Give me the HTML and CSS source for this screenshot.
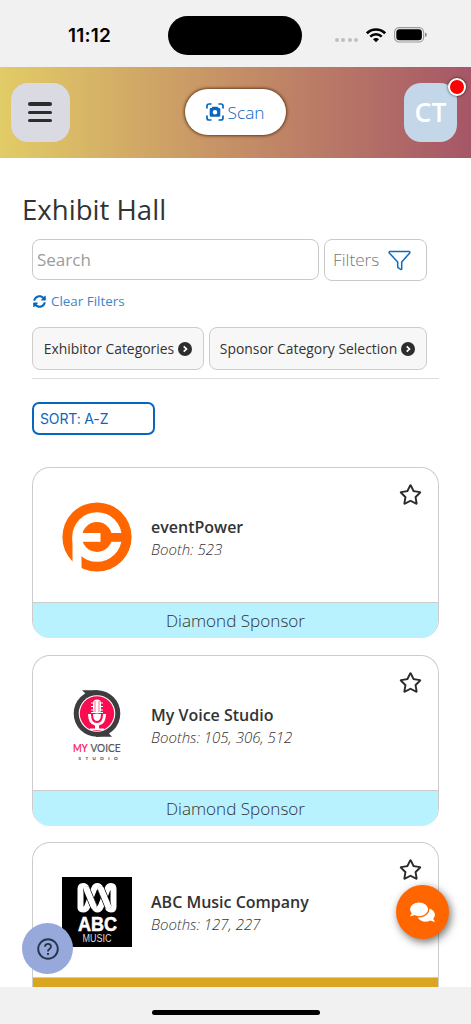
FILE: index.html
```html
<!DOCTYPE html>
<html lang="en">
<head>
<meta charset="utf-8">
<title>Exhibit Hall</title>
<link rel="stylesheet" href="styles.css">
</head>
<body>
<svg class="defs" width="0" height="0">
  <symbol id="star" viewBox="0 0 576 512"><path d="M528.1 171.5L382 150.2 316.7 17.8c-11.700-23.600-45.600-23.900-57.400 0L194 150.200 47.900 171.500c-26.200 3.800-36.700 36.100-17.700 54.600l105.700 103-25 145.500c-4.500 26.300 23.200 46 46.400 33.700L288 439.600l130.700 68.700c23.200 12.200 50.900-7.400 46.400-33.700l-25-145.500 105.700-103c19-18.500 8.500-50.800-17.700-54.600zM388.600 312.300l23.700 138.400L288 385.400l-124.300 65.300 23.700-138.400-100.600-98 139-20.200 62.200-126 62.200 126 139 20.200-100.600 98z"/></symbol>
  <symbol id="chevron" viewBox="0 0 14 14"><circle cx="7" cy="7" r="7" fill="#2d2d2d"/><path d="M5.700 4.300 8.500 7 5.700 9.700" fill="none" stroke="#fff" stroke-width="1.700"/></symbol>
</svg>
<div class="app">
  <div class="status">
    <span class="time">11:12</span>
    <span class="island"></span>
    <span class="signals">
      <span class="dots"><i></i><i></i><i></i><i></i></span>
      <svg class="wifi" width="20" height="15" viewBox="0 0 20 15" fill="none" stroke="#000" stroke-width="2.600"><path d="M.9 5.300C6 .2 14 .2 19.100 5.300"/><path d="M4.300 8.700c3.200-3.200 8.200-3.200 11.400 0"/><path d="M7 11.300c1.600-1.600 4.400-1.600 6 0L10 14.300z" fill="#000" stroke="none"/></svg>
      <svg width="33" height="16" viewBox="0 0 33 16"><rect x=".6" y=".6" width="29" height="14.400" rx="4.600" fill="none" stroke="#999" stroke-width="1.100"/><rect x="2.300" y="2.300" width="25.600" height="11" rx="3.200"/><path d="M31 5.500q1.800.6 1.800 2.300T31 10.100z" fill="#888"/></svg>
    </span>
  </div>
  <header class="topbar">
    <button class="menu"><i></i><i></i><i></i></button>
    <button class="scan">
      <svg width="18" height="18" viewBox="0 0 18 18"><path d="M1 5.500V3q0-2 2-2h2.500M12.500 1H15q2 0 2 2v2.500M17 12.500V15q0 2-2 2h-2.500M5.500 17H3q-2 0-2-2v-2.500" fill="none" stroke="#0a66bd" stroke-width="1.700"/><path fill="#0a66bd" fill-rule="evenodd" d="M5.500 5 6.500 3.700h5L12.500 5H13q1.300 0 1.300 1.300v6.200q0 1.300-1.300 1.300H5q-1.300 0-1.300-1.300V6.300Q3.700 5 5 5zM9 7a2.300 2.300 0 1 0 0 4.600A2.300 2.300 0 0 0 9 7z"/></svg>
      <span>Scan</span>
    </button>
    <div class="avatar">CT<span class="badge"></span></div>
  </header>
  <main class="content">
    <h1>Exhibit Hall</h1>
    <div class="body">
      <div class="search-row">
        <div class="search">Search</div>
        <div class="filters">Filters <svg width="23" height="21" viewBox="0 0 23 21"><path d="M1.600 1.500h19.800q.9.700.1 1.700L13.700 12v7.300l-1 .2-3-2.200V12L1.500 3.200q-.8-1 .1-1.700z" fill="none" stroke="#0a6bc4" stroke-width="1.500" stroke-linejoin="round"/></svg></div>
      </div>
      <div class="clear"><svg width="13" height="13" viewBox="0 0 512 512"><path fill="#0a66bd" d="M370.720 133.280C339.458 104.008 298.888 87.962 255.848 88c-77.458.068-144.328 53.178-162.791 126.850-1.344 5.363-6.122 9.150-11.651 9.150H24.103c-7.498 0-13.194-6.807-11.807-14.176C33.933 94.924 134.813 8 256 8c66.448 0 126.791 26.136 171.315 68.685L463.030 40.970C478.149 25.851 504 36.559 504 57.941V192c0 13.255-10.745 24-24 24H345.941c-21.382 0-32.090-25.851-16.971-40.971l41.750-41.749zM32 296h134.059c21.382 0 32.090 25.851 16.971 40.971l-41.750 41.750c31.262 29.273 71.835 45.319 114.876 45.280 77.418-.07 144.315-53.144 162.787-126.849 1.344-5.363 6.122-9.150 11.651-9.150h57.304c7.498 0 13.194 6.807 11.807 14.176C478.067 417.076 377.187 504 256 504c-66.448 0-126.791-26.136-171.315-68.685L48.970 471.030C33.851 486.149 8 475.441 8 454.059V320c0-13.255 10.745-24 24-24z"/></svg><span>Clear Filters</span></div>
      <div class="categories">
        <button class="cat cat-exhibitor"><span>Exhibitor Categories</span><svg width="14" height="14"><use href="#chevron"/></svg></button>
        <button class="cat cat-sponsor"><span>Sponsor Category Selection</span><svg width="14" height="14"><use href="#chevron"/></svg></button>
      </div>
      <div class="sort">SORT: A-Z</div>
      <div class="cards">
        <article class="card">
          <div class="info">
            <svg class="logo" viewBox="0 0 70 70"><circle cx="35" cy="35" r="34.600" fill="#f60"/><circle cx="35" cy="35" r="24.800" fill="#fff"/><circle cx="35" cy="35" r="15" fill="#f60"/><path fill="#f60" d="M46 31h20v8.800H46z"/><path fill="#fff" d="M18 31h20.500v8.800H18z"/><path fill="#fff" d="M10.500 35H19.500v33l-3 2-6-10z"/></svg>
            <div class="text"><h2>eventPower</h2><p>Booth: 523</p></div>
            <svg class="star" width="23" height="23"><use href="#star"/></svg>
          </div>
          <div class="tier">Diamond Sponsor</div>
        </article>
        <article class="card">
          <div class="info">
            <svg class="logo" viewBox="0 0 70 70"><circle cx="35" cy="23.500" r="23.300" fill="#3d3d3f"/><path fill="#3d3d3f" d="M20 .3h16v4L24 6q-1-4-4-5.700zM50 46.700H34v-4l12-2q1 4 4 6z"/><circle cx="35" cy="23.500" r="18.300" fill="#fff"/><circle cx="35" cy="23.500" r="17.200" fill="#f90d50"/><rect x="31" y="9.500" width="8" height="14" rx="4" fill="#fff"/><path d="M29 13h12M29 16.500h12M29 20h12M29 22.500h12" stroke="#fff" stroke-width="1"/><path d="M33 11v11M37 11v11" stroke="#f90d50" stroke-width=".6"/><path fill="#fff" d="M26 24h3q0 9 6 9t6-9h3q0 10-7 11.500v3h5v1.500H28v-1.500h5v-3Q26 34 26 24zM31 24h8q0 7-4 7t-4-7z"/><text x="11" y="62" font-size="10.500" textLength="14.500" lengthAdjust="spacingAndGlyphs" class="voice pink">MY</text><text x="28.500" y="62" font-size="10.500" textLength="30" lengthAdjust="spacingAndGlyphs" class="voice">VOICE</text><text x="16.500" y="69.500" font-size="4.500" textLength="39" class="voice">STUDIO</text></svg>
            <div class="text"><h2>My Voice Studio</h2><p>Booths: 105, 306, 512</p></div>
            <svg class="star" width="23" height="23"><use href="#star"/></svg>
          </div>
          <div class="tier">Diamond Sponsor</div>
        </article>
        <article class="card">
          <div class="info">
            <svg class="logo" viewBox="0 0 70 70"><path d="M0 0h70v70H0z"/><g fill="none" stroke-linecap="round" stroke-linejoin="round"><path d="M18.500 31V12q0-3 2.600-3T25 12l7 17q1.500 3.500 3.500 3.500T39 29l6.500-17q1-3 3.500-3t2.500 3v18q0 2.500-2.600 2.500T46 30L38.500 12q-1-3-3.200-3T32 12l-7 18q-1 2.500-3.600 2.500T18.500 31z" stroke="#fff" stroke-width="6"/><path d="M25 13l6 15M39.500 13l6 15" stroke="#000" stroke-width="7.400"/><path d="M24.500 12l7 17M39 12l7 17" stroke="#fff" stroke-width="6"/></g><text x="35.500" y="54" text-anchor="middle" class="abc" textLength="39" lengthAdjust="spacingAndGlyphs">ABC</text><text x="35" y="64.500" text-anchor="middle" class="music" textLength="29" lengthAdjust="spacingAndGlyphs">MUSIC</text></svg>
            <div class="text"><h2>ABC Music Company</h2><p>Booths: 127, 227</p></div>
            <svg class="star" width="23" height="23"><use href="#star"/></svg>
          </div>
          <div class="tier gold"></div>
        </article>
      </div>
    </div>
  </main>
  <footer class="home"><span></span></footer>
  <button class="fab help"><svg width="22" height="22" viewBox="0 0 22 22" fill="none" stroke="#29344e" stroke-width="1.900"><circle cx="11" cy="11" r="9.800"/><path d="M8 8.700q.2-2.800 3-2.800t3 2.600q0 1.500-1.500 2.400T11 13.500"/><path d="M11 15v2"/></svg></button>
  <button class="fab chat"><svg width="25" height="22" viewBox="0 0 576 512"><path fill="#fff" d="M416 192c0-88.400-93.100-160-208-160S0 103.600 0 192c0 34.300 14.100 65.900 38 92-13.400 30.200-35.500 54.200-35.800 54.500-2.200 2.300-2.800 5.700-1.500 8.700S4.800 352 8 352c36.600 0 66.900-12.300 88.700-25 32.200 15.700 70.300 25 111.300 25 114.900 0 208-71.600 208-160zm122 220c23.900-26 38-57.700 38-92 0-66.900-53.500-124.200-129.300-148.100.9 6.600 1.300 13.300 1.300 20.100 0 105.900-107.700 192-240 192-10.800 0-21.300-.8-31.700-1.900C207.800 439.600 281.800 480 368 480c41 0 79.100-9.200 111.300-25 21.800 12.700 52.100 25 88.700 25 3.200 0 6.100-1.900 7.300-4.800 1.300-2.900.7-6.300-1.500-8.700-.3-.3-22.400-24.200-35.800-54.500z"/></svg></button>
</div>
</body>
</html>
```
FILE: styles.css
```css
* { box-sizing: border-box; }
body { margin: 0; background: #fff; color: #333; font-family: "Open Sans", "Noto Sans", sans-serif; }
button { border: 0; padding: 0; font: inherit; color: inherit; }
h1, h2, p { margin: 0; }
svg { display: block; flex: none; }
.defs { position: absolute; }

.app { position: relative; width: 471px; height: 1024px; display: flex; flex-direction: column; overflow: hidden; }

.status { flex: none; height: 67px; padding: 3px 44px 0 68px; background: #f1f1f1; display: grid; grid-template-columns: 100px 134px 1fr; align-items: center; }
.time { color: #000; font: 600 19px/24px Inter, sans-serif; letter-spacing: .2px; padding-top: 1px; }
.island { height: 39px; border-radius: 20px; background: #000; }
.signals { display: flex; justify-content: flex-end; align-items: center; }
.dots { display: flex; gap: 2.400px; margin: 10px 8px 0 0; }
.dots i { width: 4px; height: 4px; border-radius: 50%; background: #bfbfbf; }
.wifi { margin-right: 8px; }

.topbar { flex: none; height: 90.500px; padding: 0 14px 0 11px; background: linear-gradient(90deg, #e2cc66, #c58f66 50%, #a65667); display: flex; align-items: center; justify-content: space-between; }
.menu { width: 59px; height: 59px; border-radius: 17px; background: #dadae2; display: flex; flex-direction: column; align-items: center; justify-content: center; gap: 5px; padding-right: 1px; }
.menu i { width: 24px; height: 3.400px; border-radius: 2px; background: #2c2c2c; }
.scan { width: 101px; height: 46px; margin-left: -4px; border-radius: 23px; background: #fff; box-shadow: 0 0 3px 1px rgba(70, 35, 10, .75); color: #0a66bd; display: flex; align-items: center; justify-content: center; gap: 4px; font-size: 17.300px; font-weight: 300; }
.avatar { position: relative; width: 53px; height: 59px; border-radius: 17px; background: #c3d7e8; color: #fff; font-size: 26.500px; font-weight: 600; line-height: 59px; text-align: center; }
.badge { position: absolute; top: -5px; right: -9px; width: 18px; height: 18px; border: 2.500px solid #fff; border-radius: 50%; background: #f00; box-shadow: 0 0 3px rgba(0, 0, 0, .7); }

.content { flex: 1; min-height: 0; overflow: hidden; padding-top: 31.500px; }
h1 { padding-left: 22px; font-size: 27.600px; font-weight: 400; line-height: 41px; }
.body { padding: 9px 32px 0; }
.search-row { display: flex; gap: 5px; }
.search, .filters { border: 1px solid #c9c9c9; border-radius: 8px; font-size: 17px; line-height: 40px; color: #9c9c9c; }
.search { width: 287px; height: 41px; padding-left: 4px; }
.filters { width: 103px; height: 42px; padding-left: 8px; display: flex; align-items: center; gap: 9px; font-size: 17.200px; font-weight: 300; color: #777; }
.clear { margin-top: 9.500px; height: 21px; padding-left: 1px; display: flex; align-items: center; gap: 5px; color: #0a66bd; font-size: 13.400px; }
.clear span { opacity: .8; }
.categories { display: flex; gap: 4.500px; padding: 15.500px 0 8px; border-bottom: 1px solid #ddd; }
.cat { height: 43px; border: 1px solid #ccc; border-radius: 8px; background: #f7f7f7; display: flex; align-items: center; justify-content: center; gap: 4px; font-size: 13.900px; white-space: nowrap; }
.cat-exhibitor { width: 172px; }
.cat-sponsor { width: 218px; }
.sort { width: 123px; height: 33px; margin-top: 23px; padding-left: 6px; border: 2px solid #0a66bd; border-radius: 7px; color: #0a66bd; font: 400 14px/29px Inter, sans-serif; letter-spacing: -.15px; }

.cards { margin-top: 32px; display: flex; flex-direction: column; gap: 16.500px; }
.card { height: 171px; border: 1px solid #ccc; border-bottom: 0; border-radius: 18px; overflow: hidden; }
.info { height: 134px; padding: 0 16px 0 29px; display: flex; align-items: center; }
.logo { width: 70px; height: 70px; margin-top: 4px; }
.text { flex: 1; padding: 6px 0 0 19px; }
h2 { font-size: 16px; font-weight: 600; line-height: 22px; }
.text p { font-size: 15px; font-weight: 300; font-style: italic; line-height: 22px; }
.star { align-self: flex-start; margin-top: 15px; fill: #2b2b2b; }
.tier { height: 36px; border-top: 1px solid #ccc; background: #b8f2ff; text-align: center; font-size: 17.100px; font-weight: 300; line-height: 36px; }
.gold { background: #daa520; }
.voice { font-family: Lato, sans-serif; fill: #555; stroke: #555; stroke-width: .2px; }
.pink { fill: #f90d50; stroke: #f90d50; }
.abc { font: 700 20px "Liberation Sans", sans-serif; fill: #fff; stroke: #fff; stroke-width: .6px; }
.music { font: 400 10px "Liberation Sans", sans-serif; fill: #ddd; }

.home { flex: none; height: 37px; background: #f1f1f1; display: flex; justify-content: center; padding-top: 23px; }
.home span { width: 168px; height: 5px; border-radius: 3px; background: #000; }

.fab { position: absolute; border-radius: 50%; display: grid; place-items: center; }
.help { left: 22px; top: 923px; width: 51px; height: 51px; background: #97a9da; }
.chat { left: 396px; top: 885px; width: 53px; height: 54px; background: #f60; box-shadow: 2px 3px 8px rgba(0, 0, 0, .55); }
```
